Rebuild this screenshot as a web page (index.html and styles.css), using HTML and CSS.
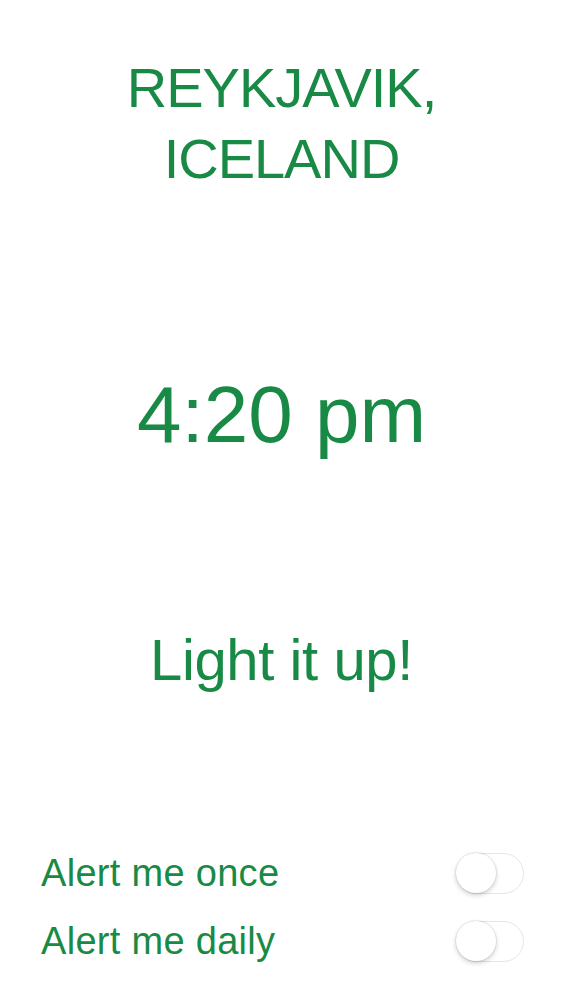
FILE: index.html
```html
<!DOCTYPE html>
<html lang="en">
<head>
<meta charset="utf-8">
<title>Reykjavik</title>
<link rel="stylesheet" href="styles.css">
</head>
<body>
<main class="screen">
  <h1 class="city">REYKJAVIK,<br>ICELAND</h1>
  <div class="time">4:20 pm</div>
  <div class="tagline">Light it up!</div>
  <section class="alerts">
    <div class="alert-row">
      <span class="alert-label">Alert me once</span>
      <span class="switch"><span class="knob"></span></span>
    </div>
    <div class="alert-row">
      <span class="alert-label">Alert me daily</span>
      <span class="switch"><span class="knob"></span></span>
    </div>
  </section>
</main>
</body>
</html>
```

FILE: styles.css
```css
html, body {
  margin: 0;
  padding: 0;
  background: #ffffff;
}

.screen {
  display: flex;
  flex-direction: column;
  align-items: center;
  width: 563px;
  height: 1000px;
  font-family: "Liberation Sans", Arial, sans-serif;
  color: #198a45;
}

.city {
  margin: 52px 0 0;
  font-size: 56px;
  font-weight: 400;
  line-height: 71px;
  letter-spacing: -1px;
  text-align: center;
}

.time {
  margin-top: 181px;
  font-size: 80px;
  line-height: 80px;
  letter-spacing: 0;
}

.tagline {
  margin-top: 176px;
  font-size: 58px;
  line-height: 58px;
  letter-spacing: -0.4px;
}

.alerts {
  margin-top: 150px;
  align-self: stretch;
  display: flex;
  flex-direction: column;
  padding: 0 39px 0 41px;
}

.alert-row {
  display: flex;
  align-items: center;
  justify-content: space-between;
  height: 68px;
}

.alert-label {
  font-size: 38px;
  line-height: 42px;
  letter-spacing: 0.3px;
}

.switch {
  position: relative;
  box-sizing: border-box;
  width: 68px;
  height: 41px;
  border-radius: 21px;
  border: 1.5px solid #e6e6e6;
  background: #ffffff;
}

.knob {
  position: absolute;
  left: -1px;
  top: -1px;
  width: 40px;
  height: 40px;
  border-radius: 50%;
  background: #ffffff;
  box-shadow: 0 2px 5px rgba(0, 0, 0, 0.2), 0 0 0 1px rgba(0, 0, 0, 0.06);
}
```
